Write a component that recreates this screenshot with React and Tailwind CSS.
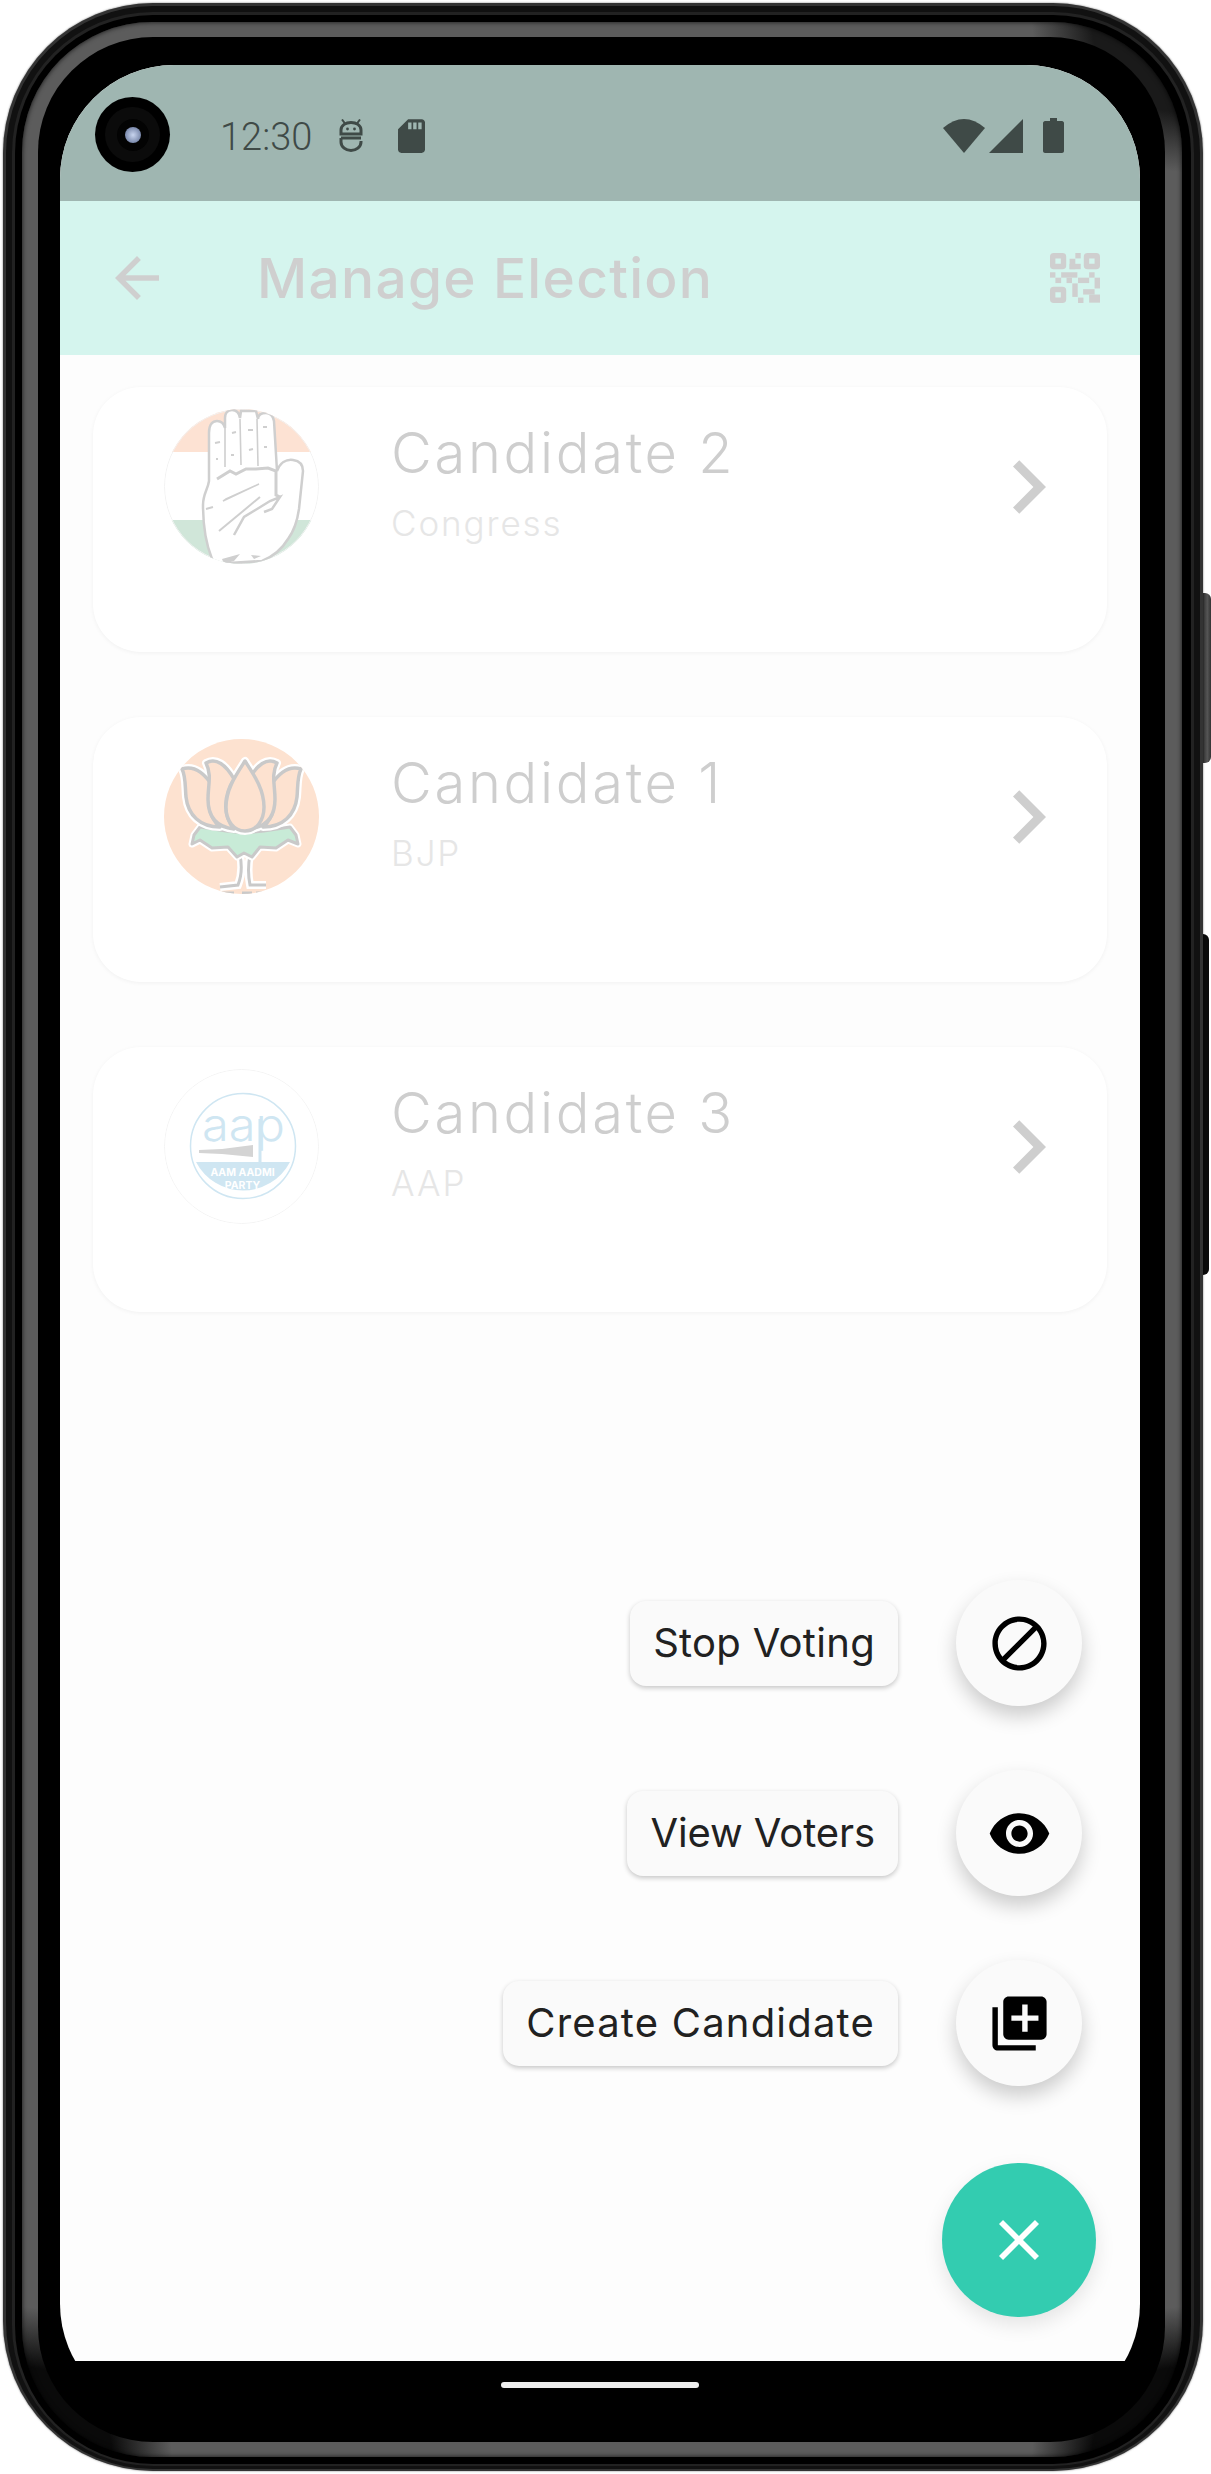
import React from "react";
import { MdBlock, MdVisibility, MdLibraryAdd } from "react-icons/md";

function HandLogo() {
	return (
		<svg viewBox="0 0 155 155" className="h-full w-full">
			<rect width="155" height="155" fill="#ffffff" />
			<rect width="155" height="43" fill="#fde2d3" />
			<rect y="111" width="155" height="44" fill="#d0e6d9" />
			<circle cx="77.5" cy="77.5" r="77" fill="none" stroke="#f2f2f2" />
			<path
				d="M48 150C42 135 39 115 39 96C39 85 44 80 45 72L45 24C45 15 49 12 53 12C57 12 60 15 61 19L61 9C61 3 65 1 68 1C72 1 75 3 76 9L77 2L92 2L94 10C94 5 98 4 102 4C106 4 109 7 110 12L113 62C116 54 122 50 129 51C136 52 139 56 139 62L135 100C133 114 130 122 124 130C118 140 108 148 98 152L50 155Z"
				fill="#ffffff"
				stroke="#cfcfcf"
				strokeWidth="2.5"
			/>
			<path d="M76 10L77 56M93 10L94 57M61 19L61 58" fill="none" stroke="#cfcfcf" strokeWidth="1.6" />
			<path d="M53 70L66 62L72 65L82 60L92 60L104 59L112 62L112 86L116 88" fill="none" stroke="#cfcfcf" strokeWidth="3" />
			<path d="M59 92L95 75L62 90Z" fill="#cfcfcf" stroke="#cfcfcf" strokeWidth="1.5" />
			<path d="M55 122L96 88" fill="none" stroke="#cfcfcf" strokeWidth="2" />
			<path d="M70 126L80 108L106 92L116 88L108 100L100 103" fill="none" stroke="#cfcfcf" strokeWidth="2.5" />
			<path d="M42 100L49 98M51 34L56 33M52 50L54 50M68 24L72 23M84 21L89 21M99 18L103 18M85 41L89 40M100 38L103 38M67 46L70 46" stroke="#cfcfcf" strokeWidth="2" />
			<path d="M58 150L76 145L70 152L60 155ZM87 146L97 147L90 150Z" fill="#cfcfcf" />
		</svg>
	);
}

function LotusLogo() {
	// drawn back to front so the centre petal sits on top
	const petals = [
		"M18 30C30 26 40 34 48 46C42 60 44 78 56 88C36 88 24 76 22 58C21 48 22 38 18 30Z",
		"M137 30C125 26 115 34 107 46C113 60 111 78 99 88C119 88 131 76 133 58C134 48 133 38 137 30Z",
		"M42 24C52 18 62 26 70 40C60 56 58 76 70 90C52 88 44 78 44 60C44 46 48 36 42 24Z",
		"M113 24C103 18 93 26 85 40C95 56 97 76 85 90C103 88 111 78 111 60C111 46 107 36 113 24Z",
		"M81 22C72 36 62 50 62 68C62 82 70 92 81 92C92 92 100 82 100 68C100 50 90 36 81 22Z",
	];
	const leaves = "M36 88L30 96L28 105L36 101L48 109L64 108L73 118L80 114L88 118L96 108L112 109L124 101L134 105L132 96L126 88L100 92L81 94L62 92Z";
	const stem = "M76 116C78 126 78 136 74 146L56 148M86 116C84 126 84 136 86 146L102 146";
	return (
		<svg viewBox="0 0 155 155" className="h-full w-full">
			<rect width="155" height="155" fill="#fde2d0" />
			<path d={stem} fill="none" stroke="#ffffff" strokeWidth="8" />
			<path d={stem} fill="none" stroke="#c9c9c9" strokeWidth="3" />
			<path d={leaves} fill="#c8ebd7" stroke="#ffffff" strokeWidth="7" strokeLinejoin="round" />
			<path d={leaves} fill="#c8ebd7" stroke="#c9c9c9" strokeWidth="3" strokeLinejoin="round" />
			{petals.map((d) => (
				<path key={d + "w"} d={d} fill="#ffffff" stroke="#ffffff" strokeWidth="8" strokeLinejoin="round" />
			))}
			{petals.map((d) => (
				<path key={d} d={d} fill="#fde2d0" stroke="#c9c9c9" strokeWidth="3.5" strokeLinejoin="round" />
			))}
			<path d="M58 154L70 154M78 154L88 154M92 154L102 154" stroke="#c9c9c9" strokeWidth="3" />
		</svg>
	);
}

function AapLogo() {
	return (
		<svg viewBox="0 0 155 155" className="h-full w-full">
			<circle cx="77.5" cy="77.5" r="77" fill="#ffffff" stroke="#f4f4f4" />
			<path d="M32 93A53 53 0 0 0 126 93Z" fill="#cfe6f2" />
			<circle cx="79" cy="77" r="52.5" fill="none" stroke="#cfe6f2" strokeWidth="1.5" />
			<text x="38" y="72" fontFamily="Inter, sans-serif" fontSize="46" fontWeight="300" textLength="83" lengthAdjust="spacingAndGlyphs" fill="#cfe6f2">
				aap
			</text>
			<path d="M96 50L96 93" stroke="#cfe6f2" strokeWidth="3" />
			<path d="M35 81L58 80L89 76L89 88L58 85L35 84Z" fill="#d4d4d4" />
			<text x="78.5" y="107" textAnchor="middle" fontFamily="Inter, sans-serif" fontSize="10.5" fontWeight="700" fill="#ffffff">
				AAM AADMI
			</text>
			<text x="78.5" y="120" textAnchor="middle" fontFamily="Inter, sans-serif" fontSize="10.5" fontWeight="700" fill="#ffffff">
				PARTY
			</text>
		</svg>
	);
}

function CandidateCard({ name, party, Logo }) {
	return (
		<div className="flex h-[265px] items-start rounded-[48px] bg-white pt-[22px] pr-[61px] pl-[71px] shadow-[0_1px_4px_rgba(0,0,0,0.05)]">
			<div className="h-[155px] w-[155px] shrink-0 overflow-hidden rounded-full">
				<Logo />
			</div>
			<div className="ml-[72px] flex-1 pt-4">
				<p className="text-[56px] leading-[56px] font-light tracking-[2.7px] text-[#cecece]">{name}</p>
				<p className="mt-[25px] text-[35px] leading-[35px] font-light tracking-[1.9px] text-[#e6e6e6]">{party}</p>
			</div>
			<div className="flex h-[155px] items-center">
				<svg viewBox="8.59 6 7.41 12" className="h-[54px] w-[33px] fill-[#cecece]">
					<path d="M10 6 8.59 7.41 13.17 12l-4.58 4.59L10 18l6-6z" />
				</svg>
			</div>
		</div>
	);
}

function FabRow({ label, trackingClass, children }) {
	return (
		<div className="flex items-center gap-[58px] pr-[14px]">
			<div className={`flex h-[85px] items-center rounded-2xl bg-[#fafafa] px-[23px] text-[40px] text-[#212121] shadow-[0_2px_5px_rgba(0,0,0,0.22)] ${trackingClass}`}>
				{label}
			</div>
			<div className="flex h-[126px] w-[126px] items-center justify-center rounded-full bg-[#fafafa] text-black shadow-[0_10px_20px_rgba(0,0,0,0.2)]">
				{children}
			</div>
		</div>
	);
}

function StatusBar() {
	return (
		<div className="flex h-[136px] items-center bg-[#9fb6b1] pt-[5px] pr-[76px] pl-[35px] text-[#3f4a47]">
			<div className="mb-[2px] flex h-[75px] w-[75px] items-center justify-center rounded-full bg-black">
				<div className="flex h-[55px] w-[55px] items-center justify-center rounded-full bg-[#0b0b0b]">
					<div className="flex h-[32px] w-[32px] items-center justify-center rounded-full bg-[#030303]">
						<div className="h-4 w-4 rounded-full bg-[radial-gradient(circle,#c8d4ee,#5a6a90)]" />
					</div>
				</div>
			</div>
			<span className="mt-[3px] ml-[50px] font-['Roboto',sans-serif] text-[38px] leading-none font-light">12:30</span>
			{/* adb status icon */}
			<svg viewBox="0 0 24 33" className="ml-[27px] h-[33px] w-[24px] fill-none stroke-current stroke-[3]">
				<path d="M3 0.5L6 4.5M21 0.5L18 4.5" strokeWidth="2" />
				<path d="M2 15V11C2 6 7 3.5 12 3.5C17 3.5 22 6 22 11V15Z" />
				<path d="M2 19H22M2 19V23C2 28 7 31.5 12 31.5C17 31.5 22 28 22 23V22" />
				<circle cx="8.5" cy="10" r="1.4" className="fill-current stroke-0" />
				<circle cx="15.5" cy="10" r="1.4" className="fill-current stroke-0" />
			</svg>
			<svg viewBox="4 2 16 20" className="ml-[35px] h-[34px] w-[27px] fill-current">
				<path d="M18 2h-8L4.02 8 4 20c0 1.1.9 2 2 2h12c1.1 0 2-.9 2-2V4c0-1.1-.9-2-2-2zm-6 6h-2V4h2v4zm3 0h-2V4h2v4zm3 0h-2V4h2v4z" />
			</svg>
			<div className="ml-auto flex items-center">
				<svg viewBox="0 0 42 34" className="h-[34px] w-[42px] fill-current">
					<path d="M0 9Q21 -9 42 9L21 34Z" />
				</svg>
				<svg viewBox="0 0 34 34" className="ml-1 h-[34px] w-[34px] fill-current">
					<path d="M34 0V34H0Z" />
				</svg>
				<svg viewBox="0 0 21 35" className="ml-5 h-[35px] w-[21px] fill-current">
					<path d="M7 0H14V3H19C20 3 21 4 21 5V33C21 34 20 35 19 35H2C1 35 0 34 0 33V5C0 4 1 3 2 3H7Z" />
				</svg>
			</div>
		</div>
	);
}

function QrIcon() {
	const blocks = [
		[75, 0, 16, 16],
		[58, 17, 17, 31],
		[58, 32, 33, 16],
		[0, 57, 16, 16],
		[16, 73, 17, 16],
		[33, 57, 48, 16],
		[49, 73, 16, 16],
		[66, 90, 16, 40],
		[83, 73, 33, 16],
		[116, 57, 16, 16],
		[132, 73, 16, 32],
		[98, 107, 34, 16],
		[116, 123, 32, 24],
		[83, 132, 16, 16],
	];
	return (
		<svg viewBox="0 0 148 148" className="h-[50px] w-[50px]">
			<g fill="none" stroke="#cfcfcf" strokeWidth="16">
				<rect x="8" y="8" width="32" height="32" rx="3" />
				<rect x="108" y="8" width="32" height="32" rx="3" />
				<rect x="8" y="108" width="32" height="32" rx="3" />
			</g>
			<g fill="#cfcfcf">
				{blocks.map(([x, y, w, h]) => (
					<rect key={`${x}-${y}`} x={x} y={y} width={w} height={h} />
				))}
			</g>
		</svg>
	);
}

function Screen() {
	return (
		<div className="relative h-[2296px] w-[1080px] overflow-hidden">
			<div className="h-[2353px] overflow-hidden rounded-[114px] bg-[#fdfdfd]">
				<StatusBar />
				<div className="flex h-[154px] items-center bg-[#d5f5ee] pr-10 pl-[55px]">
					<svg viewBox="4 4 16 16" className="h-[44px] w-[44px] fill-[#cfcfcf]">
						<path d="M20 11H7.83l5.59-5.59L12 4l-8 8 8 8 1.41-1.41L7.83 13H20v-2z" />
					</svg>
					<h1 className="ml-[98px] flex-1 text-[55px] leading-none font-medium tracking-[1.3px] text-[#cfcfcf]">Manage Election</h1>
					<QrIcon />
				</div>
				<div className="flex flex-col gap-[65px] px-[33px] pt-8">
					<CandidateCard name="Candidate 2" party="Congress" Logo={HandLogo} />
					<CandidateCard name="Candidate 1" party="BJP" Logo={LotusLogo} />
					<CandidateCard name="Candidate 3" party="AAP" Logo={AapLogo} />
				</div>
			</div>

			{/* floating action menu */}
			<div className="absolute right-[44px] bottom-[44px] flex flex-col items-end">
				<div className="flex flex-col items-end gap-16">
					<FabRow label="Stop Voting" trackingClass="tracking-[0.3px]">
						<MdBlock size={65} />
					</FabRow>
					<FabRow label="View Voters" trackingClass="tracking-[-0.1px]">
						<MdVisibility size={65} />
					</FabRow>
					<FabRow label="Create Candidate" trackingClass="tracking-[1.2px]">
						<MdLibraryAdd size={65} />
					</FabRow>
				</div>
				<div className="mt-[77px] flex h-[154px] w-[154px] items-center justify-center rounded-full bg-[#33ccb0] shadow-[0_8px_20px_rgba(0,0,0,0.1)]">
					<svg viewBox="5 5 14 14" className="h-10 w-10 fill-white">
						<path d="M19 6.41 17.59 5 12 10.59 6.41 5 5 6.41 10.59 12 5 17.59 6.41 19 12 13.41 17.59 19 19 17.59 13.41 12z" />
					</svg>
				</div>
			</div>
		</div>
	);
}

export default function App() {
	return (
		<div className="relative h-[2474px] w-[1211px] overflow-hidden bg-white pt-[3px] pl-[3px] font-['Inter',sans-serif]">
			{/* side buttons */}
			<div className="absolute top-[593px] left-[1202px] h-[170px] w-[9px] rounded-r-md bg-[linear-gradient(90deg,#2a2a2a,#555555_60%,#333333)]" />
			<div className="absolute top-[934px] left-[1202px] h-[341px] w-[7px] rounded-r-md bg-[#0a0a0a]" />

			{/* device frame */}
			<div className="relative w-[1200px] rounded-[150px] bg-[#333333] p-[3px] pb-[2px] shadow-[0_0_2px_rgba(0,0,0,0.6)]">
				<div className="rounded-[147px] bg-[#111111] p-[6px] pb-[3px]">
					<div className="rounded-[141px] bg-[#222222] p-[3px] pb-[2px]">
						<div className="rounded-[138px] bg-black pt-[7px] pr-[9px] pb-[7px] pl-[7px]">
							<div className="rounded-[130px] bg-[radial-gradient(circle_at_left_bottom,#0a0a0a_90px,transparent_150px),radial-gradient(circle_at_right_bottom,#0a0a0a_90px,transparent_150px),radial-gradient(circle_at_right_top,#1a1a1a_90px,transparent_150px),linear-gradient(#5c5c5c,#5c5c5c)] pt-[15px] pr-[17px] pb-[15px] pl-4 shadow-[inset_0_0_5px_rgba(0,0,0,0.8)]">
								<div className="rounded-[115px] bg-black pt-7 pr-[25px] pl-[22px]">
									<Screen />
									<div className="flex h-[81px] justify-center pt-[21px]">
										<div className="h-[6px] w-[198px] rounded-full bg-[#eeeeee]" />
									</div>
								</div>
							</div>
						</div>
					</div>
				</div>
			</div>
		</div>
	);
}
